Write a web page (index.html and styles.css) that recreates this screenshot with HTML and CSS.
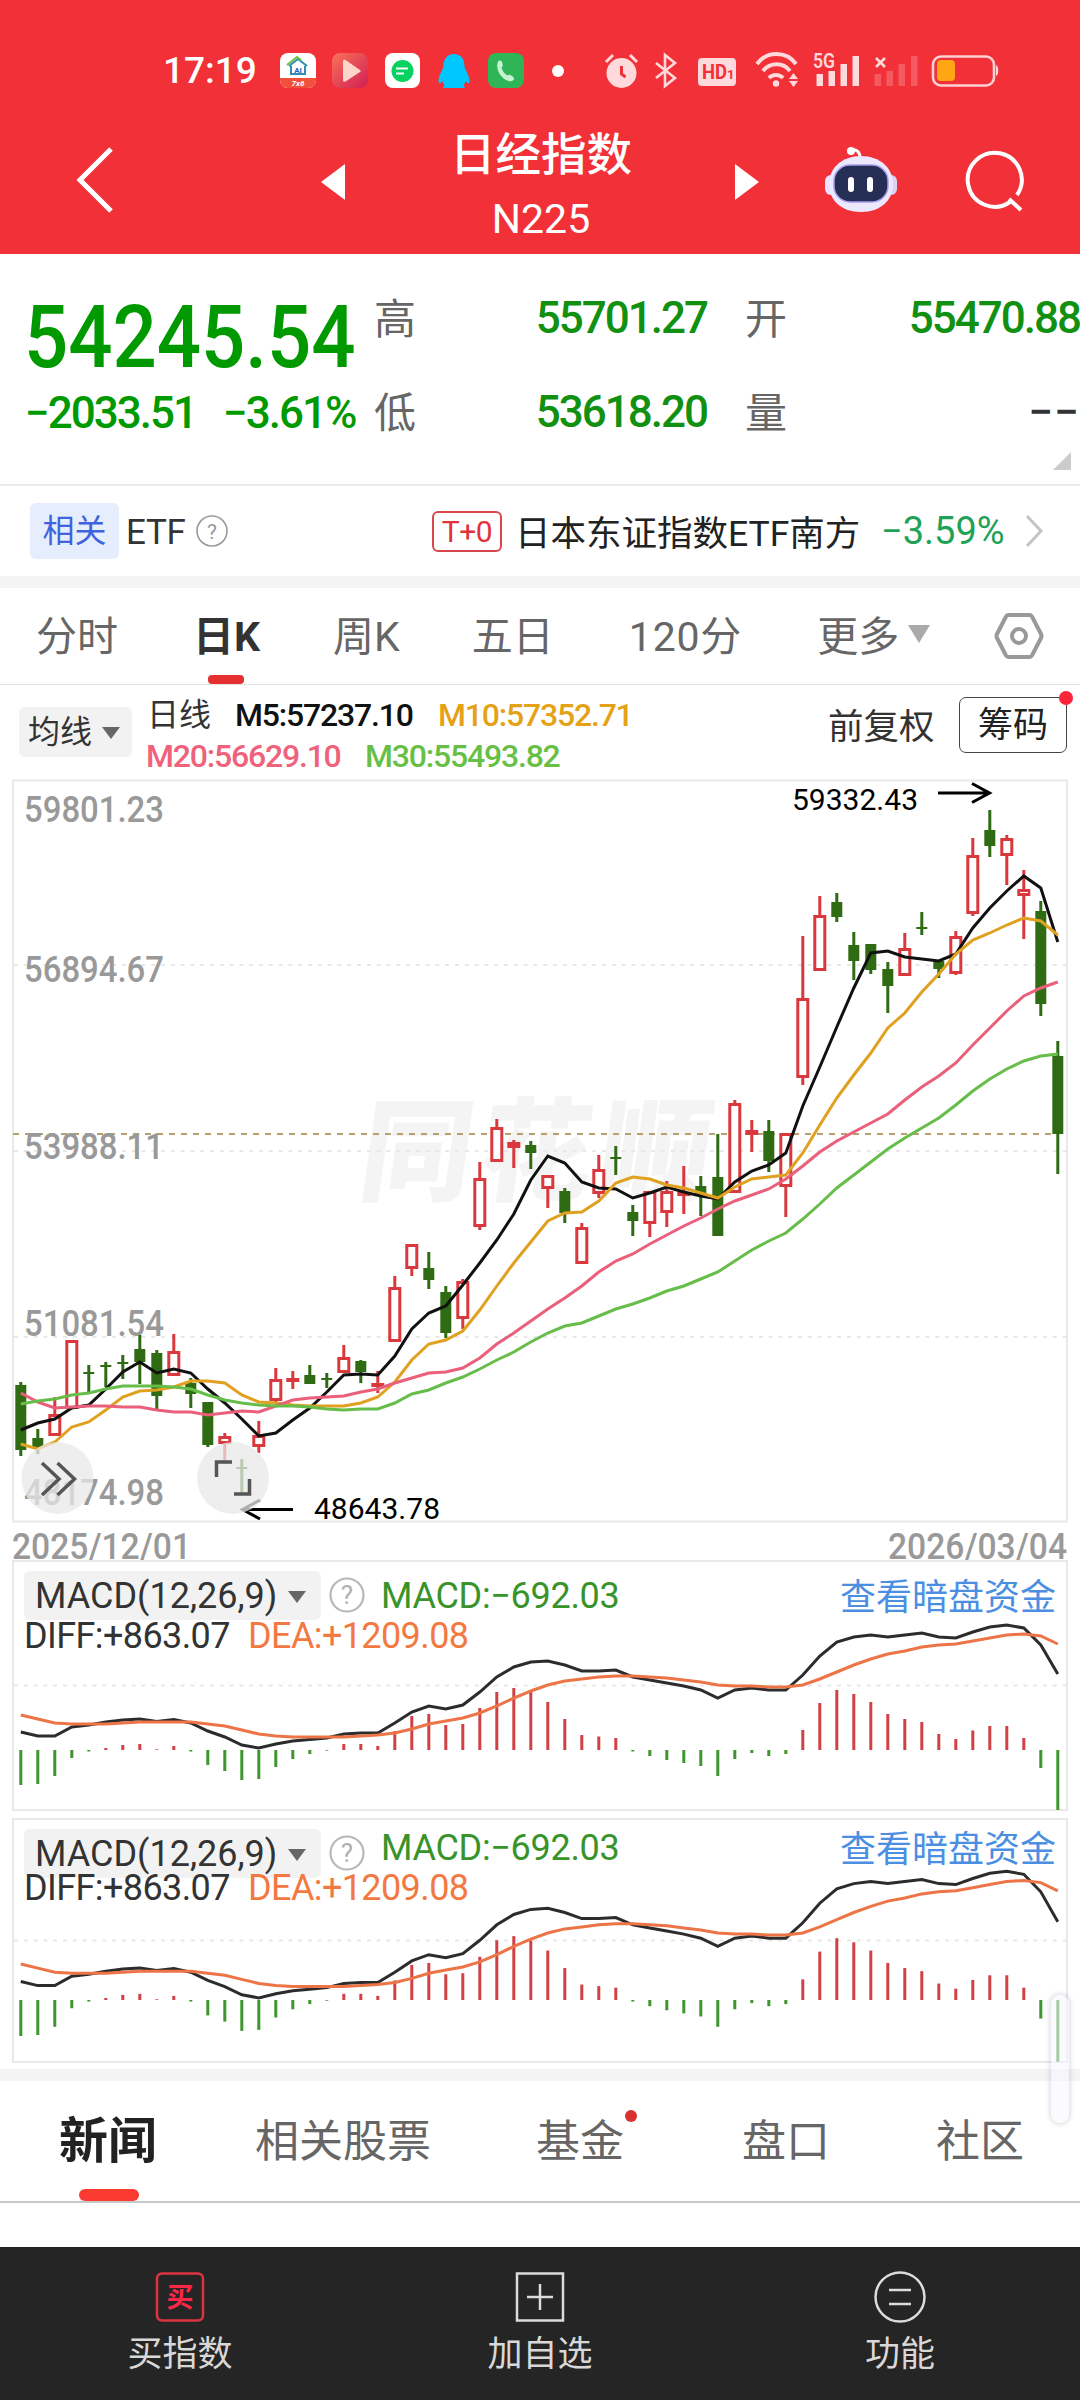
FILE: index.html
```html
<!DOCTYPE html>
<html lang="zh-CN">

<head>
    <meta charset="utf-8">
    <meta name="viewport" content="width=device-width">
    <title>日经指数 N225</title>
    <link rel="stylesheet" href="styles.css">
</head>

<body>
    <div id="wrapper">
        <header>
            <div class="status">
                <span class="time">17:19</span>
                <svg class="status-icons" width="730" height="40" viewBox="275 51 730 40">
                    <!-- app notifications -->
                    <rect x="280" y="53" width="36" height="35" rx="8" fill="#fff" />
                    <path d="M280 78h36v2a8 8 0 0 1-8 8h-20a8 8 0 0 1-8-8z" fill="#f0503c" />
                    <path d="M289 66l9-7 9 7M291 66v8h14v-8" fill="none" stroke="#2f8fb0" stroke-width="2" />
                    <path d="M287 65l10-8 4 3" fill="none" stroke="#6cc04a" stroke-width="2" />
                    <text x="298" y="73" font-size="8" font-weight="700" text-anchor="middle" fill="#2a62c8">AI</text>
                    <text x="298" y="86" font-size="8" font-weight="700" font-style="italic" text-anchor="middle" fill="#fff">7x6</text>
                    <linearGradient id="player" x1="0" y1="0" x2="1" y2="1">
                        <stop offset="0" stop-color="#fb7258" />
                        <stop offset="1" stop-color="#d01f55" />
                    </linearGradient>
                    <rect x="332" y="53" width="36" height="35" rx="8" fill="url(#player)" />
                    <path d="M343 61.500c0-2 1.500-2 2.500-1.500l14.500 10c1 .7 1 1.500 0 2l-14.500 9.500c-1 .6-2.500.5-2.500-1.500z" fill="#fcd5cc" />
                    <rect x="385" y="53" width="35" height="35" rx="8" fill="#fff" />
                    <circle cx="402.500" cy="71" r="11" fill="#07d160" />
                    <path d="M396 68.500h12M396 73.500h8" stroke="#fff" stroke-width="2" />
                    <path d="M454 54c-7 0-10.500 5-10.500 12 0 3-5 9-5 15 0 3 1.500 3 4 0 .5 2 1 3 2 4l-1.500 3h22l-1.500-3c1-1 1.500-2 2-4 2.500 3 4 3 4 0 0-6-5-12-5-15 0-7-3.500-12-10.500-12z" fill="#00c8ff" />
                    <rect x="488" y="53" width="36" height="35" rx="8" fill="#2fb457" />
                    <path d="M498 61.500c2-2 4-.5 4.500 2 .5 2.500 0 3-1 4 1 4 3.500 6.500 6 8 1.500-1 2.500-1 4.500.5 3 2 2.500 4 0 5-7 2.500-18-10-14-19.500z" fill="#c8f2d2" />
                    <circle cx="558" cy="71" r="6" fill="#fff" />
                    <!-- system icons -->
                    <g fill="#ffd9dc" stroke="none">
                        <circle cx="621.500" cy="73" r="15" />
                        <path d="M606 62l7-7M637 62l-7-7" stroke="#ffd9dc" stroke-width="3" />
                        <path d="M621.500 66v8l4 3" fill="none" stroke="#f13037" stroke-width="3" />
                        <path d="M656 63l19 15-10 8V55l10 8-19 15" fill="none" stroke="#ffd9dc" stroke-width="2.600" />
                        <rect x="698" y="58" width="38" height="28" rx="4" />
                        <path d="M757 64a24 24 0 0 1 39 0M763 71a17 17 0 0 1 27 0M769 78a9.500 9.500 0 0 1 14 0" fill="none" stroke="#ffd9dc" stroke-width="4" />
                        <circle cx="776" cy="83.500" r="3.200" />
                        <path d="M789 79l4.500-6 4.500 6zM789 81l4.500 6 4.500-6z" />
                        <path d="M816.500 74h6.500v12h-6.500zM828.500 71h6.500v15h-6.500zM840.500 64h6.500v22h-6.500zM852.500 56h6.500v30h-6.500z" />
                        <path d="M874.500 74h6.500v12h-6.500zM886.500 71h6.500v15h-6.500zM898.500 64h6.500v22h-6.500zM911 56h6.500v30h-6.500z" opacity=".25" />
                        <path d="M876 58l9 9M885 58l-9 9" stroke="#ffd9dc" stroke-width="2.600" />
                        <rect x="933" y="56.500" width="61" height="29" rx="8" fill="none" stroke="#ffd0d3" stroke-width="2.600" />
                        <path d="M996 65c3 1 3 10 0 11z" />
                    </g>
                    <rect x="937" y="60" width="18" height="21" rx="4" fill="#ffa614" />
                    <text x="702" y="79" font-size="20" font-weight="700" fill="#f13037" textLength="25" lengthAdjust="spacingAndGlyphs">HD</text>
                    <text x="727" y="79" font-size="13" font-weight="700" fill="#f13037">1</text>
                    <text x="813" y="68" font-size="20" font-weight="600" fill="#ffd9dc" textLength="22" lengthAdjust="spacingAndGlyphs">5G</text>
                </svg>
            </div>
            <nav class="title-bar">
                <svg class="back" width="40" height="70" viewBox="0 0 40 70"><path d="M36 4L5 35l31 31" fill="none" stroke="#fff" stroke-width="5" /></svg>
                <svg class="prev" width="24" height="36" viewBox="0 0 24 36"><path d="M24 0v36L0 18z" fill="#fff" /></svg>
                <div class="title">
                    <h1>日经指数</h1>
                    <span>N225</span>
                </div>
                <svg class="next" width="24" height="36" viewBox="0 0 24 36"><path d="M0 0v36l24-18z" fill="#fff" /></svg>
                <svg class="robot" width="74" height="68" viewBox="0 0 74 68">
                    <circle cx="27" cy="5" r="4" fill="#fff" />
                    <path d="M27 4c6-1 9 2 9 8" fill="none" stroke="#fff" stroke-width="3" />
                    <rect x="1" y="29" width="12" height="20" rx="6" fill="#e6e2ff" />
                    <rect x="61" y="29" width="12" height="20" rx="6" fill="#d9d2fb" />
                    <path d="M37 10c19 0 32 12 32 28S57 66 37 66 5 54 5 38s13-28 32-28z" fill="#ece9ff" />
                    <rect x="10" y="19" width="54" height="37" rx="16" fill="#252f55" stroke="#a79cf0" stroke-width="1.500" />
                    <rect x="24" y="31" width="6" height="15" rx="3" fill="#fff" />
                    <rect x="43" y="31" width="6" height="15" rx="3" fill="#fff" />
                </svg>
                <svg class="search" width="64" height="64" viewBox="0 0 64 64"><path d="M48 52a27 27 0 1 1 7-7M47 49l12 11" fill="none" stroke="#fff" stroke-width="4" /></svg>
            </nav>
        </header>

        <section class="quote">
            <div class="last">
                <div class="price">54245.54</div>
                <div class="change"><span>−2033.51</span><span>−3.61%</span></div>
            </div>
            <div class="details">
                <span class="name">高</span><span class="value">55701.27</span>
                <span class="name">开</span><span class="value">55470.88</span>
                <span class="name">低</span><span class="value">53618.20</span>
                <span class="name">量</span><span class="value none">−−</span>
            </div>
            <i class="corner"></i>
        </section>

        <section class="related">
            <span class="badge">相关</span>
            <span class="etf">ETF</span>
            <svg class="help" width="34" height="34" viewBox="0 0 34 34"><circle cx="17" cy="17" r="15" fill="none" stroke="#999" stroke-width="1.600" /><text x="17" y="24.500" font-size="21" text-anchor="middle" fill="#999">?</text></svg>
            <span class="t0">T+0</span>
            <span class="fund">日本东证指数ETF南方</span>
            <span class="fund-change">−3.59%</span>
            <svg class="more" width="18" height="34" viewBox="0 0 18 34"><path d="M2 2l14 15L2 32" fill="none" stroke="#c4c4c4" stroke-width="3" /></svg>
        </section>

        <nav class="periods">
            <a>分时</a>
            <a class="active">日K</a>
            <a>周K</a>
            <a>五日</a>
            <a>120分</a>
            <a>更多<i class="down"></i></a>
            <svg width="50" height="48" viewBox="0 0 50 48"><path d="M14.500 3h21q1.500 0 2.500 1.500l9 17.500q1 2 0 4l-9 17.500q-1 1.500-2.500 1.500h-21q-1.500 0-2.500-1.500L3 26q-1-2 0-4l9-17.500Q13 3 14.500 3z" fill="none" stroke="#999" stroke-width="4" /><circle cx="25" cy="24" r="7" fill="none" stroke="#999" stroke-width="4" /></svg>
        </nav>

        <section class="legend">
            <span class="ma-select">均线<i class="down"></i></span>
            <div class="ma-values">
                <div><span class="kind">日线</span><span class="m5">M5:57237.10</span><span class="m10">M10:57352.71</span></div>
                <div><span class="m20">M20:56629.10</span><span class="m30">M30:55493.82</span></div>
            </div>
            <span class="adjust">前复权</span>
            <span class="chips">筹码<i class="dot"></i></span>
        </section>

        <svg id="kline" width="1080" height="785" viewBox="0 775 1080 785"></svg>

        <section class="macd">
            <svg class="plot" width="1080" height="251" viewBox="0 1560 1080 251"></svg>
            <div class="macd-head">
                <span class="macd-select">MACD(12,26,9)<i class="down"></i></span>
                <svg class="help" width="36" height="36" viewBox="0 0 36 36"><circle cx="18" cy="18" r="16.500" fill="none" stroke="#b8b8b8" stroke-width="2.200" /><text x="18" y="27" font-size="26" text-anchor="middle" fill="#b0b0b0">?</text></svg>
                <span class="macd-value">MACD:−692.03</span>
                <a class="dark-pool">查看暗盘资金</a>
            </div>
            <div class="macd-lines"><span class="diff">DIFF:+863.07</span><span class="dea">DEA:+1209.08</span></div>
        </section>

        <section class="macd second">
            <svg class="plot" width="1080" height="246" viewBox="0 1818 1080 246"></svg>
            <div class="macd-head">
                <span class="macd-select">MACD(12,26,9)<i class="down"></i></span>
                <svg class="help" width="36" height="36" viewBox="0 0 36 36"><circle cx="18" cy="18" r="16.500" fill="none" stroke="#b8b8b8" stroke-width="2.200" /><text x="18" y="27" font-size="26" text-anchor="middle" fill="#b0b0b0">?</text></svg>
                <span class="macd-value">MACD:−692.03</span>
                <a class="dark-pool">查看暗盘资金</a>
            </div>
            <div class="macd-lines"><span class="diff">DIFF:+863.07</span><span class="dea">DEA:+1209.08</span></div>
            <i class="handle"></i>
        </section>

        <nav class="tabs">
            <a class="active">新闻</a>
            <a>相关股票</a>
            <a>基金<i class="dot"></i></a>
            <a>盘口</a>
            <a>社区</a>
        </nav>

        <footer>
            <a class="buy">
                <svg width="54" height="54" viewBox="0 0 54 54"><rect x="4" y="3.500" width="46" height="47" rx="5" fill="none" stroke="#dd3540" stroke-width="2.500" /><text x="27" y="37" font-size="27" font-weight="700" text-anchor="middle" fill="#fa2846">买</text></svg>
                买指数
            </a>
            <a>
                <svg width="54" height="54" viewBox="0 0 54 54"><path d="M4 3.500h46v47H4zM14 27h26M27 14v26" fill="none" stroke="#dcdcdc" stroke-width="2.500" /></svg>
                加自选
            </a>
            <a>
                <svg width="54" height="54" viewBox="0 0 54 54"><circle cx="27" cy="27" r="24.500" fill="none" stroke="#dcdcdc" stroke-width="2.500" /><path d="M16 20h22M16 34h22" stroke="#dcdcdc" stroke-width="2.500" /></svg>
                功能
            </a>
        </footer>
    </div>
    <script src="chart.js"></script>
</body>

</html>
```

FILE: styles.css
```css
body {
    margin: 0;
    background-color: #fff;
    font-family: Roboto, "Noto Sans CJK SC", sans-serif;
    color: #333;
}

#wrapper {
    width: 1080px;
    height: 2400px;
    overflow: hidden;
    display: flex;
    flex-flow: column;
}

#wrapper > * {
    box-sizing: border-box;
    flex-shrink: 0;
}

svg {
    display: block;
    flex-shrink: 0;
}

span,
a {
    white-space: nowrap;
}

.down {
    display: inline-block;
    border: 9px solid transparent;
    border-top: 12px solid #666;
    border-bottom: 0;
}

.dot {
    position: absolute;
    width: 14px;
    height: 14px;
    border-radius: 50%;
    background-color: #fb2438;
}

/* header */

header {
    height: 254px;
    background-color: #f13037;
    color: #fff;
}

.status {
    height: 118px;
    box-sizing: border-box;
    padding: 51px 0 0 163px;
    display: flex;
}

.time {
    width: 112px;
    font-size: 37px;
    line-height: 40px;
    font-weight: 500;
}

.title-bar {
    height: 136px;
    display: flex;
    align-items: flex-start;
}

.back {
    margin: 27px 0 0 75px;
}

.prev {
    margin: 46px 0 0 206px;
}

.title {
    width: 392px;
    text-align: center;
}

.title h1 {
    margin: 10px 0 0;
    font-size: 45.5px;
    line-height: 56px;
    font-weight: 500;
}

.title span {
    display: block;
    margin-top: 11px;
    font-size: 41px;
    line-height: 48px;
}

.next {
    margin: 46px 0 0 -2px;
}

.robot {
    margin: 28px 0 0 65px;
}

.search {
    margin: 32px 0 0 64px;
}

/* quote */

.quote {
    position: relative;
    height: 232px;
    border-bottom: 2px solid #ececec;
    display: flex;
}

.last {
    width: 374px;
    color: #009900;
}

.price {
    margin: 31px 0 0 24px;
    font-size: 88px;
    line-height: 104px;
    font-weight: 500;
    transform: scaleX(0.885);
    transform-origin: left;
}

.change {
    margin: -2px 0 0 25px;
    font-size: 44px;
    line-height: 52px;
    font-weight: 500;
    letter-spacing: -2px;
    display: flex;
    gap: 27px;
}

.details {
    display: grid;
    grid-template-columns: 42px 291px 80px 293px;
    grid-template-rows: 94px 94px;
    align-items: center;
    height: 188px;
    margin-top: 17px;
}

.name {
    margin-top: -5px;
    font-size: 42px;
    color: #666;
    text-align: right;
}

.value {
    text-align: right;
    font-size: 44px;
    font-weight: 500;
    letter-spacing: -2px;
    color: #119011;
}

.none {
    color: #333;
    letter-spacing: 1px;
}

.corner {
    position: absolute;
    right: 9px;
    bottom: 14px;
    border-left: 18px solid transparent;
    border-bottom: 18px solid #ccc;
}

/* related fund */

.related {
    height: 102px;
    padding-left: 30px;
    border-bottom: 12px solid #f4f4f4;
    display: flex;
    align-items: center;
}

.badge {
    width: 89px;
    height: 56px;
    line-height: 56px;
    border-radius: 6px;
    background-color: #e6edfd;
    color: #3e63e0;
    font-size: 32px;
    text-align: center;
}

.etf {
    margin: 2px 0 0 7px;
    font-size: 35px;
    letter-spacing: -0.3px;
    width: 69px;
}

.t0 {
    box-sizing: border-box;
    width: 70px;
    height: 41px;
    margin-left: 203px;
    border: 2px solid #d8474e;
    border-radius: 6px;
    color: #e2333b;
    font-size: 30px;
    line-height: 38px;
    text-align: center;
    letter-spacing: -0.5px;
}

.fund {
    width: 366px;
    margin: -2px 0 0 13px;
    font-size: 35.5px;
    letter-spacing: 0;
    color: #222;
}

.fund-change {
    width: 144px;
    font-size: 38px;
    color: #1fa257;
}

/* period tabs */

.periods {
    height: 97px;
    border-bottom: 1px solid #e2e2e2;
    padding-left: 36px;
    display: flex;
    align-items: center;
    font-size: 41px;
    color: #666;
}

.periods a {
    position: relative;
    box-sizing: border-box;
    height: 96px;
    padding-top: 3px;
    line-height: 93px;
    margin-right: 75px;
}

.periods a:nth-child(2) {
    margin-right: 73px;
}

.periods a:nth-child(3) {
    margin-right: 72px;
}

.periods a:nth-child(5) {
    letter-spacing: 0.8px;
}

.periods a:nth-child(6) {
    margin-right: 64px;
}

.periods .active {
    font-weight: 700;
    color: #333;
}

.periods .active::after {
    content: "";
    position: absolute;
    left: 50%;
    bottom: 0;
    width: 36px;
    height: 9px;
    margin-left: -19px;
    border-radius: 4px;
    background-color: #e62f30;
}

.periods .down {
    margin: 0 0 8px 9px;
    border-width: 18px 11px 0;
    border-top-color: #aaa;
}

/* moving averages */

.legend {
    height: 90px;
    padding-left: 19px;
    display: flex;
}

.ma-select {
    width: 113px;
    height: 50px;
    margin-top: 22px;
    box-sizing: border-box;
    padding-left: 9px;
    border-radius: 6px;
    background-color: #f2f2f2;
    font-size: 32px;
    line-height: 51px;
}

.ma-select .down {
    margin: 0 0 4px 10px;
}

.ma-values {
    width: 690px;
    margin-top: 9px;
    padding-left: 14px;
    box-sizing: border-box;
    font-size: 32px;
    line-height: 42px;
    font-weight: 500;
    letter-spacing: -1.2px;
}

.ma-values div {
    display: flex;
    height: 41px;
}

.kind {
    margin-left: 1px;
    width: 88px;
    font-weight: 400;
    letter-spacing: 0;
}

.m5 {
    width: 203px;
    color: #111;
}

.m10 {
    color: #e6a217;
}

.m20 {
    width: 219px;
    color: #f0617c;
}

.m30 {
    color: #68bf45;
}

.adjust {
    width: 131px;
    margin-left: 6px;
    font-size: 35.5px;
    line-height: 84px;
}

.chips {
    position: relative;
    box-sizing: border-box;
    width: 108px;
    height: 56px;
    margin-top: 12px;
    border: 1.500px solid #444;
    border-radius: 7px;
    font-size: 35px;
    line-height: 56px;
    text-align: center;
    color: #222;
}

.chips .dot {
    top: -7px;
    right: -7px;
}

/* charts */

#kline {
    overflow: visible;
}

.axis {
    font-size: 36px;
    font-weight: 500;
    fill: #999;
}

.mark {
    font-size: 30px;
    fill: #000;
}

.watermark {
    font-family: "Noto Sans CJK SC", sans-serif;
    font-size: 112px;
    font-weight: 900;
    fill: #f4f4f4;
}

.macd {
    position: relative;
    height: 251px;
    padding: 11px 24px 0 24px;
}

.second {
    margin-top: 7px;
    height: 246px;
}

.plot {
    position: absolute;
    left: 0;
    top: 0;
}

.macd-head,
.macd-lines {
    position: relative;
    display: flex;
    align-items: center;
    font-size: 36px;
}

.macd-head {
    height: 48px;
}

.macd-select {
    box-sizing: border-box;
    width: 297px;
    height: 49px;
    line-height: 51px;
    padding-left: 11px;
    border-radius: 6px;
    background-color: #f2f2f2;
}

.macd-select .down {
    margin: 0 0 5px 11px;
}

.macd-head .help {
    margin-left: 8px;
}

.macd-value {
    margin: 2px 0 0 16px;
    letter-spacing: -0.3px;
    color: #38942a;
}

.second .macd-value {
    margin-top: -10px;
}

.dark-pool {
    margin: -3px 0 0 auto;
    color: #4c8fe2;
}

.second .dark-pool {
    margin-top: -15px;
}

.macd-lines {
    height: 34px;
    letter-spacing: -0.6px;
}

.second .macd-lines {
    margin-top: -6px;
}

.diff {
    width: 224px;
}

.dea {
    color: #f27a42;
}

.handle {
    position: absolute;
    left: 1051px;
    top: 177px;
    width: 18px;
    height: 128px;
    border-radius: 9px;
    background-color: rgba(248, 248, 255, 0.55);
    box-shadow: 0 0 4px 2px rgba(90, 90, 120, 0.16);
    z-index: 2;
}

/* info tabs */

.tabs {
    height: 134px;
    margin-top: 5px;
    border-top: 12px solid #f4f4f4;
    border-bottom: 2px solid #c8c8c8;
    padding-left: 59px;
    display: flex;
    font-size: 44px;
    color: #666;
}

.tabs a {
    position: relative;
    box-sizing: border-box;
    height: 120px;
    padding-top: 2px;
    line-height: 118px;
}

.tabs a:nth-child(2) {
    margin: 0 105px 0 98px;
}

.tabs a:nth-child(4) {
    margin: 0 106px 0 118px;
}

.tabs .active {
    font-size: 49px;
    font-weight: 700;
    color: #222;
}

.tabs .active::after {
    content: "";
    position: absolute;
    left: 20px;
    bottom: 0;
    width: 60px;
    height: 12px;
    border-radius: 6px;
    background-color: #fb3a32;
}

.tabs .dot {
    top: 29px;
    right: -13px;
    width: 12px;
    height: 12px;
    background-color: #d93030;
}

/* bottom bar */

footer {
    margin-top: 44px;
    height: 153px;
    background-color: #252525;
    display: grid;
    grid-template-columns: repeat(3, 1fr);
}

footer a {
    display: flex;
    flex-flow: column;
    align-items: center;
    padding-top: 23px;
    font-size: 35px;
    line-height: 62px;
    color: #d8d8d8;
}
```

FILE: chart.js
```js
'use strict';

// one row per day: direction, high, body top, body bottom, low
const candles = [
    ['g', 1382, 1385, 1450, 1456], ['g', 1429, 1438, 1447, 1454], ['r', 1397, 1414, 1436, 1436], ['r', 1340, 1340, 1409, 1409],
    ['g', 1365, 1372, 1374, 1392], ['g', 1362, 1365, 1367, 1387], ['g', 1355, 1362, 1364, 1379], ['g', 1335, 1349, 1362, 1384],
    ['g', 1350, 1353, 1396, 1409], ['r', 1334, 1351, 1376, 1376], ['g', 1378, 1383, 1394, 1408], ['g', 1402, 1402, 1445, 1447],
    ['r', 1433, 1436, 1444, 1464], ['g', 1459, 1467, 1469, 1495], ['r', 1421, 1435, 1447, 1453], ['r', 1368, 1379, 1401, 1403],
    ['r', 1371, 1378, 1382, 1389], ['g', 1365, 1375, 1384, 1384], ['g', 1373, 1378, 1380, 1388], ['r', 1345, 1357, 1373, 1373],
    ['g', 1360, 1361, 1372, 1383], ['r', 1371, 1383, 1386, 1393], ['r', 1276, 1287, 1342, 1342], ['r', 1244, 1244, 1269, 1276],
    ['g', 1252, 1268, 1280, 1289], ['g', 1286, 1292, 1333, 1338], ['r', 1279, 1281, 1319, 1329], ['r', 1162, 1178, 1227, 1230],
    ['r', 1119, 1127, 1162, 1162], ['r', 1140, 1142, 1148, 1168], ['g', 1141, 1145, 1153, 1169], ['r', 1175, 1175, 1189, 1208],
    ['g', 1188, 1191, 1213, 1223], ['r', 1223, 1227, 1264, 1264], ['r', 1155, 1169, 1194, 1198], ['g', 1146, 1157, 1159, 1175],
    ['g', 1205, 1212, 1221, 1236], ['r', 1191, 1191, 1224, 1237], ['r', 1181, 1191, 1213, 1227], ['r', 1166, 1192, 1195, 1214],
    ['g', 1176, 1186, 1194, 1216], ['g', 1134, 1177, 1236, 1236], ['r', 1100, 1103, 1193, 1193], ['r', 1120, 1130, 1135, 1152],
    ['g', 1120, 1131, 1161, 1172], ['r', 1133, 1133, 1187, 1217], ['r', 936, 998, 1078, 1085], ['r', 896, 915, 971, 971],
    ['g', 893, 902, 917, 922], ['g', 932, 945, 961, 980], ['g', 944, 944, 970, 974], ['g', 962, 969, 986, 1013],
    ['r', 933, 948, 976, 976], ['g', 912, 927, 929, 935], ['g', 961, 961, 969, 978], ['r', 931, 936, 974, 975],
    ['r', 838, 855, 914, 916], ['g', 810, 830, 846, 857], ['r', 835, 838, 856, 885], ['r', 870, 889, 896, 939],
    ['g', 901, 911, 1004, 1016], ['g', 1041, 1056, 1134, 1174]
];

const averages = {
    '#111111': [1430, 1423, 1419, 1408, 1405, 1389, 1372, 1362, 1373, 1369, 1373, 1389, 1403, 1419, 1436, 1433, 1420, 1408, 1392, 1375, 1374, 1375, 1356, 1329, 1313, 1306, 1285, 1263, 1240, 1214, 1180, 1156, 1163, 1182, 1188, 1189, 1198, 1193, 1187, 1192, 1196, 1199, 1182, 1171, 1165, 1153, 1106, 1067, 1027, 988, 953, 951, 957, 959, 961, 954, 928, 908, 891, 876, 888, 942],
    '#e0a020': [1444, 1449, 1442, 1427, 1422, 1410, 1397, 1391, 1390, 1387, 1381, 1381, 1383, 1395, 1402, 1403, 1405, 1406, 1406, 1406, 1403, 1397, 1382, 1360, 1344, 1340, 1331, 1310, 1286, 1263, 1242, 1221, 1213, 1212, 1201, 1183, 1177, 1179, 1185, 1188, 1193, 1198, 1187, 1179, 1177, 1175, 1153, 1125, 1098, 1075, 1053, 1028, 1013, 992, 974, 954, 940, 933, 925, 918, 921, 935],
    '#ea5f7a': [1393, 1402, 1408, 1407, 1406, 1406, 1407, 1407, 1410, 1412, 1412, 1415, 1413, 1411, 1412, 1406, 1400, 1398, 1397, 1396, 1392, 1389, 1383, 1378, 1373, 1372, 1368, 1358, 1344, 1333, 1321, 1309, 1298, 1286, 1272, 1261, 1254, 1244, 1235, 1226, 1218, 1209, 1201, 1195, 1189, 1179, 1166, 1152, 1141, 1132, 1123, 1114, 1100, 1087, 1076, 1063, 1045, 1028, 1011, 996, 988, 982],
    '#67bd4a': [1404, 1401, 1399, 1395, 1393, 1389, 1386, 1386, 1386, 1387, 1389, 1395, 1400, 1403, 1405, 1406, 1406, 1407, 1409, 1410, 1409, 1409, 1403, 1394, 1390, 1383, 1377, 1369, 1360, 1352, 1342, 1333, 1326, 1323, 1316, 1309, 1304, 1298, 1291, 1286, 1279, 1272, 1261, 1250, 1241, 1233, 1219, 1204, 1188, 1175, 1162, 1149, 1138, 1128, 1118, 1105, 1091, 1079, 1069, 1061, 1056, 1054]
};

const bars = [-35, -34, -26, -8, -1.5, 2, 5, 6, 0.7, 4, -1.5, -15, -21, -30, -29, -17, -9, -4, -0.7, 6, 6, 4, 19, 34, 36, 25, 26, 42, 58, 62, 58, 48, 31, 15, 13.5, 12, -1.5, -6, -10, -13, -16, -26, -9, -3, -6, -4, 20, 47, 60, 56, 48, 36, 31, 28, 16, 11, 19.5, 24, 24, 12, -18, -60];
const diff = [1732, 1736, 1736, 1727, 1725, 1722, 1720, 1719, 1721.5, 1719.5, 1723, 1731, 1737, 1745, 1748, 1744, 1741, 1739.5, 1738, 1734, 1733, 1733, 1723, 1712, 1706, 1709, 1705, 1692, 1677, 1667, 1662, 1661, 1665, 1671, 1671, 1670, 1677, 1680, 1683, 1686, 1690, 1698, 1690, 1688, 1690, 1690, 1675, 1656, 1642, 1637, 1635, 1637, 1635, 1633, 1637, 1638, 1632, 1627, 1625, 1628, 1645, 1674];
const dea = [1715, 1719, 1723, 1724, 1724, 1724, 1723, 1722, 1722, 1722, 1722, 1724, 1726, 1730, 1734, 1736, 1737, 1737, 1737, 1737, 1736, 1735, 1733, 1729, 1724, 1721, 1718, 1713, 1706, 1698, 1691, 1685, 1681, 1679, 1677, 1676, 1676, 1677, 1678, 1680, 1682, 1685, 1686, 1686, 1687, 1687, 1685, 1679, 1672, 1665, 1659, 1654, 1651, 1647, 1645, 1644, 1641, 1638, 1635, 1634, 1636, 1644];

const x = i => +(20.8 + i * 17).toFixed(1);

function polyline(values, color, width) {
    const points = values.map((v, i) => x(i) + ',' + v).join(' ');
    return `<polyline points="${points}" fill="none" stroke="${color}" stroke-width="${width}"/>`;
}

function gridLine(y) {
    return `<path d="M14 ${y}H1066" stroke="#e8e8e8" stroke-width="1.8" stroke-dasharray="4 5.8"/>`;
}

function label(cls, left, y, width, text) {
    return `<text class="${cls}" x="${left}" y="${y}" textLength="${width}" lengthAdjust="spacingAndGlyphs">${text}</text>`;
}

function drawKline() {
    let out = '<path d="M13 780.500H1067V1521.500H13z" fill="none" stroke="#e9e9e9" stroke-width="2"/>';
    out += '<g transform="translate(356 1192) skewX(-8)"><text class="watermark" textLength="350">同花顺</text></g>';
    out += gridLine(965) + gridLine(1151) + gridLine(1337);
    out += '<path d="M13 1134H1056" stroke="#b79f70" stroke-width="2" stroke-dasharray="6 6"/>';

    out += label('axis', 24, 822, 140, '59801.23');
    out += label('axis', 24, 982, 140, '56894.67');
    out += label('axis', 24, 1159, 140, '53988.11');
    out += label('axis', 24, 1336, 140, '51081.54');
    out += label('axis', 24, 1505, 140, '48174.98');

    candles.forEach(([type, high, top, bottom, low], i) => {
        const cx = x(i);
        if (type === 'g') {
            out += `<path d="M${cx} ${high}V${low}" stroke="#2f6b12" stroke-width="3"/>`;
            out += `<rect x="${cx - 5.5}" y="${top}" width="11" height="${bottom - top}" fill="#2f6b12"/>`;
        } else {
            out += `<path d="M${cx} ${high}V${top}M${cx} ${bottom}V${low}" stroke="#d9383c" stroke-width="3"/>`;
            out += `<rect x="${cx - 5}" y="${top + 1.5}" width="10" height="${Math.max(bottom - top - 3, 1)}" fill="${bottom - top > 5 ? '#fff' : '#d9383c'}" stroke="#d9383c" stroke-width="3"/>`;
        }
    });

    for (const color in averages) {
        out += polyline(averages[color], color, 3);
    }

    // highest and lowest price
    out += label('mark', 792, 810, 126, '59332.43');
    out += '<path d="M938 793H989M972 783.500L989.500 793L972 802.500" fill="none" stroke="#000" stroke-width="3"/>';
    out += label('mark', 314, 1519, 126, '48643.78');
    out += '<path d="M293 1509.500H243M260 1500L242.500 1509.500L260 1519" fill="none" stroke="#000" stroke-width="3"/>';

    // floating buttons
    out += '<g fill="#e8e8e8" fill-opacity=".75"><circle cx="57.500" cy="1478" r="36"/><circle cx="233" cy="1478" r="36"/></g>';
    out += '<g fill="none" stroke="#555" stroke-width="3.500"><path d="M42 1463L59 1479L42 1495M57.500 1463L74.500 1479L57.500 1495"/>';
    out += '<path d="M216.500 1477V1462H232M249.500 1479V1494H234"/></g>';

    out += label('axis', 12, 1559, 179, '2025/12/01');
    out += label('axis', 888, 1559, 179, '2026/03/04');
    document.querySelector('#kline').innerHTML = out;
}

function drawMacd(svg, top, bottom, zero, scale) {
    const mid = (top + bottom) / 2;
    const place = v => +(zero - (1750 - v) * scale).toFixed(1);
    let out = `<path d="M13 ${top}H1067V${bottom}H13z" fill="none" stroke="#e9e9e9" stroke-width="2"/>`;
    out += gridLine(mid);
    bars.forEach((v, i) => {
        out += `<path d="M${x(i)} ${zero}V${zero - v * scale}" stroke="${v > 0 ? '#d04045' : '#3f962f'}" stroke-width="3"/>`;
    });
    out += polyline(diff.map(place), '#2c2c2c', 3);
    out += polyline(dea.map(place), '#ec7446', 3);
    svg.innerHTML = out;
}

const plots = document.querySelectorAll('.plot');

drawKline();
drawMacd(plots[0], 1561, 1810, 1750, 1);
drawMacd(plots[1], 1819, 2062, 2000, 1.03);
```
